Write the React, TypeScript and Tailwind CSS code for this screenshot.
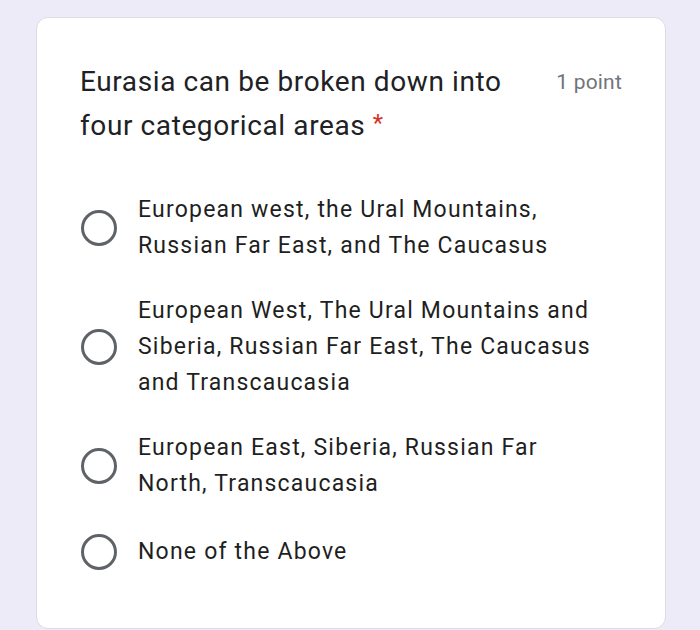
import React from "react";

const options: string[][] = [
  ["European west, the Ural Mountains,", "Russian Far East, and The Caucasus"],
  [
    "European West, The Ural Mountains and",
    "Siberia, Russian Far East, The Caucasus",
    "and Transcaucasia",
  ],
  ["European East, Siberia, Russian Far", "North, Transcaucasia"],
  ["None of the Above"],
];

export default function App() {
  return (
    <div
      className="w-[700px] h-[630px] bg-[#ecebf7] overflow-hidden pt-[17px] pl-[36px]"
      style={{ fontFamily: "Roboto, 'Noto Sans', sans-serif" }}
    >
      <div className="w-[630px] h-[612px] bg-white border border-[#dcdbe6] rounded-[12px] pl-[43px] pr-[43px] pt-[42px]">
        <div className="flex justify-between items-start">
          <div className="text-[28px] leading-[44px] tracking-[0.6px] text-[#202124]">
            <div>Eurasia can be broken down into</div>
            <div>
              four categorical areas{" "}
              <span className="text-[#d93025] text-[24px] relative top-[-4px]">*</span>
            </div>
          </div>
          <div className="text-[21px] leading-[44px] tracking-[0.2px] text-[#70757a]">1 point</div>
        </div>
        <div className="flex flex-col mt-[43px]">
          {options.map((lines, i) => (
            <div
              key={i}
              className={
                i === 0
                  ? "flex items-center"
                  : i === 3
                  ? "flex items-center mt-[32px]"
                  : "flex items-center mt-[29px]"
              }
            >
              <div className="w-[36px] h-[36px] rounded-full border-[3px] border-[#5f6368] ml-[1px] mr-[21px] shrink-0" />
              <div className="text-[23px] leading-[36px] tracking-[1.2px] text-[#1f1f1f]">
                {lines.map((l, j) => (
                  <div key={j}>{l}</div>
                ))}
              </div>
            </div>
          ))}
        </div>
      </div>
    </div>
  );
}
